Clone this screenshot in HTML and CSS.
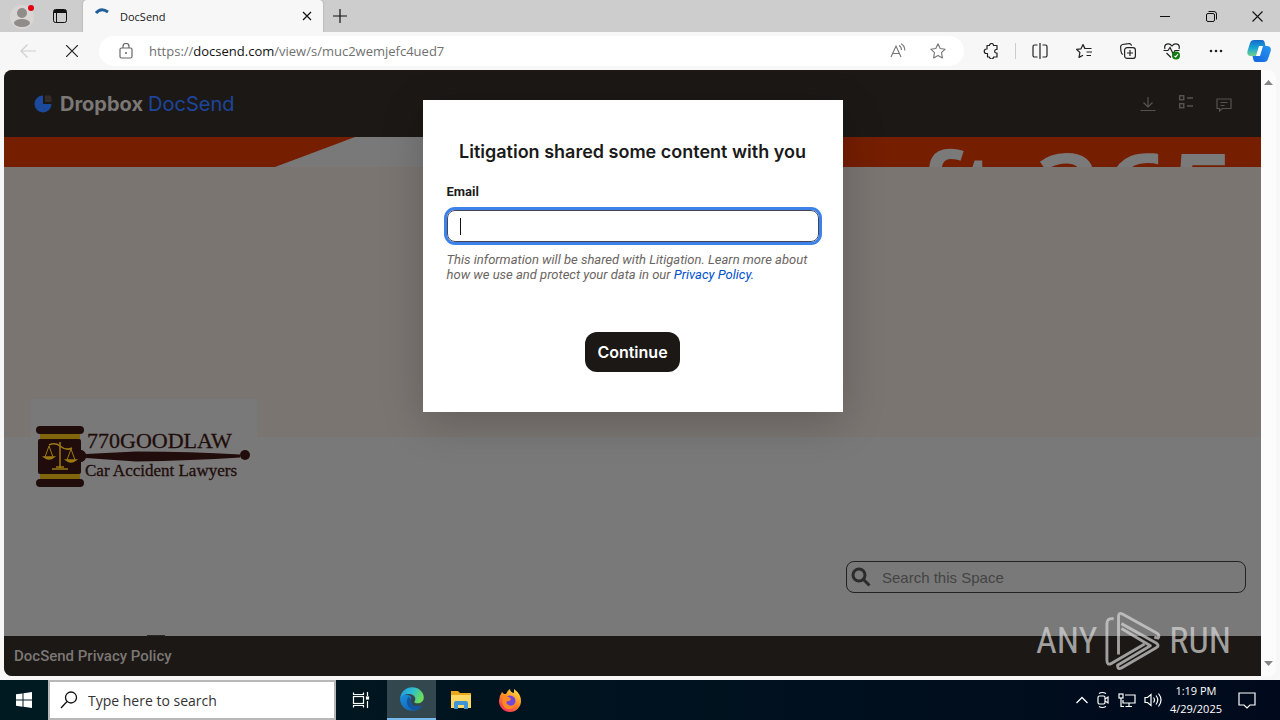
FILE: index.html
```html
<!DOCTYPE html>
<html lang="en">
<head>
    <meta charset="UTF-8">
    <meta name="viewport" content="width=device-width, initial-scale=1.0">
    <title>DocSend</title>
    <link rel="stylesheet" href="styles.css">
</head>
<body>

    <!-- tab strip -->
    <div class="tab-strip">
        <button class="profile" aria-label="Profile">
            <svg width="24" height="28" viewBox="0 0 24 28">
                <circle cx="12" cy="15" r="12" fill="#d9d5d2"/>
                <circle cx="12" cy="11" r="5" fill="#8f8c8a"/>
                <ellipse cx="12" cy="21" rx="8" ry="4" fill="#8f8c8a"/>
                <circle cx="21" cy="6" r="3" fill="#e3000f"/>
            </svg>
        </button>
        <button class="workspaces" aria-label="Tab actions">
            <svg width="14" height="14" viewBox="0 0 14 14" fill="none" stroke="#111">
                <rect x="0.5" y="0.5" width="13" height="13" rx="2"/>
                <path d="M1 3.5h12M1 2.5h12M1 1.5h12M3.500 4v9"/>
            </svg>
        </button>
        <div class="tab">
            <svg class="spinner" width="16" height="16" viewBox="0 0 16 16" fill="none" stroke="#1f5f9a" stroke-width="3">
                <path d="M2 5Q7 -1 14 4"/>
            </svg>
            <span class="tab-title">DocSend</span>
            <button class="tab-close" aria-label="Close tab">
                <svg width="10" height="10" viewBox="0 0 10 10" stroke="#111" stroke-width="1.2"><path d="M1 1l8 8M9 1l-8 8"/></svg>
            </button>
        </div>
        <button class="new-tab" aria-label="New tab">
            <svg width="14" height="14" viewBox="0 0 14 14" stroke="#111" stroke-width="1.2"><path d="M7 0v14M0 7h14"/></svg>
        </button>
        <div class="window-controls">
            <button aria-label="Minimize"><svg width="10" height="10" viewBox="0 0 10 10" stroke="#111"><path d="M0 5.5h10"/></svg></button>
            <button aria-label="Restore"><svg width="11" height="11" viewBox="0 0 11 11" fill="none" stroke="#111"><rect x="0.5" y="2.5" width="8" height="8" rx="1.5"/><path d="M2.5 0.5h5.5a2.5 2.5 0 0 1 2.500 2.500v5.500"/></svg></button>
            <button aria-label="Close"><svg width="11" height="11" viewBox="0 0 11 11" stroke="#111" stroke-width="1.1"><path d="M0.500 0.500l10 10M10.500 0.500l-10 10"/></svg></button>
        </div>
    </div>

    <!-- toolbar -->
    <div class="toolbar">
        <button aria-label="Back"><svg width="16" height="14" viewBox="0 0 16 14" fill="none" stroke="#cfcfcf" stroke-width="1.2"><path d="M16 7H1M7.500 0.500L1 7l6.500 6.500"/></svg></button>
        <button aria-label="Stop"><svg width="12" height="12" viewBox="0 0 12 12" stroke="#222" stroke-width="1.2"><path d="M0 0l12 12M12 0L0 12"/></svg></button>
        <div class="address">
            <svg width="14" height="16" viewBox="0 0 14 16" fill="none" stroke="#666" stroke-width="1.2">
                <rect x="1" y="5" width="12" height="10" rx="1.500"/>
                <path d="M4 5V3.500a3 3 0 0 1 6 0V5"/>
                <circle cx="7" cy="10" r="1" fill="#666" stroke="none"/>
            </svg>
            <span class="url">https://<b>docsend.com</b>/view/s/muc2wemjefc4ued7</span>
            <button aria-label="Read aloud">
                <svg width="16" height="16" viewBox="0 0 16 16" fill="none" stroke="#767676" stroke-width="1.1">
                    <path d="M1 14L6 3l5 11M2.800 10.500h6.400M9 2.500c2 1 2.500 2.500 2.500 4.500M11 0.800c2.800 1.400 3.800 3.700 3.800 6.700"/>
                </svg>
            </button>
            <button aria-label="Add to favorites">
                <svg width="16" height="16" viewBox="0 0 16 16" fill="none" stroke="#767676" stroke-width="1.1" stroke-linejoin="round">
                    <path d="M8 0.800l2.200 4.700 5 .7-3.700 3.500.9 5.200L8 12.400l-4.400 2.500.9-5.200L0.800 6.200l5-.7z"/>
                </svg>
            </button>
        </div>
        <button aria-label="Extensions">
            <svg width="16" height="16" viewBox="0 0 16 16" fill="none" stroke="#222" stroke-width="1.2" stroke-linejoin="round">
                <path d="M4 2.500h2.500a2 2 0 0 1 4 0H14V6.500h-1a1.800 1.800 0 0 0 0 3.500h1v4h-3.500a2 2 0 0 1-4 0H4.500V10.500h-1a2.200 2.200 0 0 1 0-4.500h.5z"/>
            </svg>
        </button>
        <span class="divider"></span>
        <button aria-label="Split screen">
            <svg width="16" height="16" viewBox="0 0 16 16" fill="none" stroke="#222" stroke-width="1.200">
                <path d="M5.500 2H2.500a1.500 1.500 0 0 0-1.500 1.500v9a1.500 1.500 0 0 0 1.500 1.500h3M10.500 2h3a1.500 1.500 0 0 1 1.500 1.500v9a1.500 1.500 0 0 1-1.500 1.500h-3M8 0v16"/>
            </svg>
        </button>
        <button aria-label="Favorites">
            <svg width="16" height="16" viewBox="0 0 16 16" fill="none" stroke="#222" stroke-width="1.200" stroke-linejoin="round">
                <path d="M9 6L7 1.500 5 5.800l-4.500.6 3.400 3.100-.9 4.900L7 12.200M7 1.500l2 4h6.500M10.500 9H16M10.500 12.500H15"/>
            </svg>
        </button>
        <button aria-label="Collections">
            <svg width="16" height="16" viewBox="0 0 16 16" fill="none" stroke="#222" stroke-width="1.200">
                <path d="M3 11.500C1.500 11 1.300 10 1 8.500L0.600 4A2.500 2.500 0 0 1 2.500 1.500L8.500 0.600A2.500 2.500 0 0 1 11.500 2.700"/>
                <rect x="4.600" y="4.600" width="10.800" height="10.800" rx="2.500"/><path d="M10 7v6M7 10h6"/>
            </svg>
        </button>
        <button aria-label="Browser essentials">
            <svg width="18" height="18" viewBox="0 0 18 18" fill="none" stroke="#222" stroke-width="1.200">
                <path d="M2 7C0.500 2 6 0 9 4c3-4 8.500-2 7 3M0.500 8.500H5l2-3 3 6 2-3h4.500M3.500 11L8 15.500"/>
                <circle cx="13" cy="13.500" r="4" fill="#107c10" stroke="none"/><path d="M11.500 14l1.200 1 2.300-3" stroke="#fff"/>
            </svg>
        </button>
        <button aria-label="Settings and more"><svg width="14" height="4" viewBox="0 0 14 4" fill="#222"><circle cx="2" cy="2" r="1.300"/><circle cx="7" cy="2" r="1.300"/><circle cx="12" cy="2" r="1.300"/></svg></button>
        <button class="copilot" aria-label="Copilot">
            <svg width="24" height="24" viewBox="0 0 24 24">
                <defs>
                    <linearGradient id="copilotA" x1="0" y1="0" x2="0" y2="1"><stop offset="0" stop-color="#1468c8"/><stop offset="0.500" stop-color="#18a5d5"/><stop offset="1" stop-color="#72d08a"/></linearGradient>
                    <linearGradient id="copilotB" x1="1" y1="0" x2="0" y2="1"><stop offset="0" stop-color="#2497ee"/><stop offset="1" stop-color="#1463df"/></linearGradient>
                </defs>
                <path fill="url(#copilotA)" d="M7 1h8c2 0 2.500 1.500 3 4l.5 2h-3c-2 0-3 1-3.500 3l-1.500 5c-.5 1.500-1.500 2-3 2H4c-3 0-4-2-3.500-5L3 4c.7-2 2-3 4-3z"/>
                <path fill="url(#copilotB)" d="M17 7h3c3 0 4.500 2 3.700 5L21 20c-.7 2-2 3-4 3H9c-2 0-2.500-1.500-3-4l-.5-2H8c2 0 3-1 3.500-3l1.500-5c.5-1.500 2-2 4-2z"/>
                <path fill="#fff" d="M12 7h4l-3 10H9z"/>
            </svg>
        </button>
    </div>

    <!-- web page -->
    <div class="browser-view">
        <div class="page">
            <header class="site-header">
                <a class="brand" href="#">
                    <svg width="18" height="18" viewBox="0 0 18 18"><path d="M9 0.500A8.500 8.500 0 1 0 17.500 9H9z" fill="#1b4a9c"/><path d="M11 0.500h4.500a2 2 0 0 1 2 2V7H11z" fill="#352c29"/></svg>
                    <span class="brand-dropbox">Dropbox</span>
                    <span class="brand-docsend">DocSend</span>
                </a>
                <nav class="site-actions">
                    <button aria-label="Download"><svg width="16" height="16" viewBox="0 0 16 16" fill="none" stroke="#55524f" stroke-width="1.200"><path d="M8 1v9.500M3.500 6.500L8 11l4.500-4.500M0.500 14.500h15"/></svg></button>
                    <button class="list-btn" aria-label="Table of contents"><svg width="16" height="16" viewBox="0 0 16 16" fill="none" stroke="#55524f" stroke-width="1.500"><rect x="1.700" y="1.700" width="4" height="4"/><rect x="1.700" y="9.700" width="4" height="4"/><path d="M9 4h6M9 12h6"/></svg></button>
                    <button aria-label="Comments"><svg width="16" height="16" viewBox="0 0 16 16" fill="none" stroke="#55524f" stroke-width="1.200"><path d="M1 3h14v9.500H6.500L3.500 15v-2.500H1zM4.500 6.500h7M4.500 9.500h4"/></svg></button>
                </nav>
            </header>

            <div class="banner">
                <div class="banner-shape"></div>
                <span class="banner-text">ft 365</span>
            </div>
            <div class="cover"></div>

            <main class="space">
                <div class="logo-card">
                    <svg width="226" height="96" viewBox="0 0 226 96" role="img" aria-label="770GOODLAW Car Accident Lawyers">
                        <rect x="9" y="33" width="40" height="50" fill="#80650d"/>
                        <rect x="5" y="27" width="48" height="8" rx="4" fill="#200c0a"/>
                        <rect x="5" y="80" width="48" height="8" rx="4" fill="#200c0a"/>
                        <rect x="7" y="40" width="43" height="35" rx="2" fill="#200c0a"/>
                        <path d="M50 51q3 0 5 4l50-2.500q55 0 104 3v3q-49 3-104 4L55 59q-2 4-5 4z" fill="#200c0a"/>
                        <circle cx="214" cy="56" r="5" fill="#200c0a"/>
                        <g fill="none" stroke="#9b7a13" stroke-width="1.500">
                            <path d="M29 43v26M18 46q6-3 11 1q6 5 12 2M21 70h16M25 68h8"/>
                            <path d="M18 47l-4 11M18 47l4 11M40 50l-4 11M40 50l4 11" stroke-width="1"/>
                            <path d="M13 58h10q-5 4-10 0zM35 61h10q-5 4-10 0z" fill="#9b7a13"/>
                        </g>
                        <text x="56" y="49" class="logo-name">770GOODLAW</text>
                        <text x="54" y="77" class="logo-sub">Car Accident Lawyers</text>
                    </svg>
                </div>
                <label class="space-search">
                    <svg width="20" height="20" viewBox="0 0 20 20" fill="none" stroke="#2b2b2b" stroke-width="3"><circle cx="8" cy="8" r="6"/><path d="M12.500 12.500l6 6"/></svg>
                    <input type="text" placeholder="Search this Space" aria-label="Search this Space">
                </label>
            </main>

            <footer class="site-footer"><a href="#">DocSend Privacy Policy</a></footer>

            <!-- email prompt -->
            <form class="modal">
                <h1>Litigation shared some content with you</h1>
                <label for="email">Email</label>
                <div class="field">
                    <input id="email" type="email">
                    <span class="caret"></span>
                </div>
                <p>This information will be shared with Litigation. Learn more about how we use and protect your data in our <a href="#">Privacy Policy.</a></p>
                <button type="button" class="continue">Continue</button>
            </form>

            <div class="watermark">
                <span>ANY</span>
                <svg width="56" height="62" viewBox="0 0 58 62" fill="none" stroke="#d8d8d8" stroke-width="3" stroke-linejoin="round">
                    <path d="M14 45V6q0-5 4-3l36 20q3 2 1 5l-4-1"/>
                    <path d="M9 8q-7-1-7 5v38q0 6 5 3l34-20"/>
                    <path d="M17 13l36 20q4 3 0 5L17 59q-4 2-4-3l34-20L17 18"/>
                </svg>
                <span>RUN</span>
            </div>
        </div>
        <div class="scrollbar">
            <svg width="9" height="5" viewBox="0 0 9 5" fill="#858585"><path d="M4.500 0L9 5H0z"/></svg>
            <svg width="9" height="5" viewBox="0 0 9 5" fill="#858585"><path d="M4.500 5L9 0H0z"/></svg>
        </div>
    </div>

    <!-- taskbar -->
    <div class="taskbar">
        <button class="start" aria-label="Start">
            <svg width="16" height="16" viewBox="0 0 16 16" fill="#fff"><path d="M0 2.300l6.500-.9v6.200H0zM7.500 1.200L16 0v7.600H7.500zM0 8.500h6.500v6.200L0 13.800zM7.500 8.500H16V16l-8.500-1.200z"/></svg>
        </button>
        <label class="task-search">
            <svg width="18" height="18" viewBox="0 0 18 18" fill="none" stroke="#111" stroke-width="1.300"><circle cx="11" cy="6.500" r="5.500"/><path d="M7 10.500L1 17"/></svg>
            <input type="text" placeholder="Type here to search" aria-label="Type here to search">
        </label>
        <button class="task" aria-label="Task view">
            <svg width="18" height="16" viewBox="0 0 18 16" fill="none" stroke="#fff" stroke-width="1.200"><path d="M1.500 0.500v2h10v-2M1.500 15.500v-2h10v2M15.500 0v4M15.500 9v7"/><rect x="1.500" y="4.500" width="10" height="7"/><rect x="14.500" y="5" width="2" height="2" fill="#fff"/></svg>
        </button>
        <button class="task active" aria-label="Microsoft Edge">
            <svg width="24" height="24" viewBox="0 0 24 24">
                <defs>
                    <linearGradient id="edgeTop" x1="0" y1="0" x2="1" y2="0.400"><stop offset="0" stop-color="#2295e0"/><stop offset="0.500" stop-color="#2bbcd2"/><stop offset="1" stop-color="#6bdc5c"/></linearGradient>
                    <linearGradient id="edgeLow" x1="0" y1="0" x2="1" y2="1"><stop offset="0" stop-color="#1c8fdc"/><stop offset="1" stop-color="#0d5cab"/></linearGradient>
                </defs>
                <path fill="url(#edgeLow)" d="M0.300 10A11.800 11.800 0 0 0 13 23.800c4 0 7-2 9-5-.5-.5-2 .7-5 .7-4 0-6.500-3-6.500-6 0-2 1-3 1-3C10 7.500 2 6 .3 10z"/>
                <path fill="url(#edgeTop)" d="M0.300 11C1 4.500 6 0.200 12 0.200c7 0 11.800 5 11.800 10 0 4-3 6-6 6-2 0-3.500-.6-3.500-1.300s1-1 1-3C15.300 9 12 7 8.500 7 4 7 1 9 .3 11z"/>
                <path fill="#1256a0" d="M9 9.500c-4 4-2.500 12 5.500 14 3-.5 6-2.500 7.500-5-6 3-12-.5-11.500-5.500z"/>
            </svg>
        </button>
        <button class="task" aria-label="File Explorer">
            <svg width="22" height="20" viewBox="0 0 22 20"><path d="M1 1h7l2 2h11v15H1z" fill="#e8a81c"/><path d="M1 5h20v13H1z" fill="#ffd765"/><path d="M4 19v-6q0-2 2-2h10q2 0 2 2v6h-4v-4H8v4z" fill="#3f94d6"/></svg>
        </button>
        <button class="task" aria-label="Firefox">
            <svg width="24" height="24" viewBox="0 0 24 24">
                <defs><linearGradient id="fox" x1="0.800" y1="0" x2="0.200" y2="1"><stop offset="0" stop-color="#ffe14a"/><stop offset="0.450" stop-color="#ff9021"/><stop offset="1" stop-color="#f22a62"/></linearGradient></defs>
                <path fill="url(#fox)" d="M4 4l2 2 2 0q1-3 4-5 0 3 4 4l0-4q7 5 7 12a11 11 0 0 1-22 0Q1 8 4 4z"/>
                <circle cx="12" cy="13" r="5.500" fill="#7446d8"/>
                <path d="M5 9q4-2 7 1 2 2-1 3-4 0-2 3 5 4 8-1-1 7-8 6-6-2-4-12z" fill="#ff8a24"/>
            </svg>
        </button>
        <div class="tray">
            <svg width="12" height="8" viewBox="0 0 12 8" fill="none" stroke="#fff" stroke-width="1.300"><path d="M0.500 7L6 1.500 11.500 7"/></svg>
            <svg width="14" height="18" viewBox="0 0 14 18" fill="none" stroke="#fff" stroke-width="1.200"><rect x="2" y="5" width="7" height="8" rx="1.500"/><path d="M9 8l3-2v6l-3-2M3 2.500q3-2 7 0M3 15.500q3 2 7 0"/></svg>
            <svg width="18" height="16" viewBox="0 0 18 16" fill="none" stroke="#fff" stroke-width="1.200"><path d="M7 3h10v8H5V8M11 11v3M7.500 14.500H14"/><rect x="1" y="2" width="4" height="4"/><path d="M3 6v8.500h3"/></svg>
            <svg width="18" height="16" viewBox="0 0 18 16" fill="none" stroke="#fff" stroke-width="1.200"><path d="M1 5.500h2.500L7 2.500v11L3.500 10.500H1zM9.500 5.500q2 2.500 0 5M12 3.500q3.500 4.500 0 9M14.500 1.500q5 6.500 0 13"/></svg>
            <div class="clock"><span>1:19 PM</span><span>4/29/2025</span></div>
            <svg width="18" height="18" viewBox="0 0 18 18" fill="none" stroke="#fff" stroke-width="1.200"><path d="M1 2h16v12h-5l-3 3-3-3H1z"/></svg>
        </div>
    </div>

</body>
</html>
```

FILE: styles.css
```css
* {
    box-sizing: border-box;
}

body {
    margin: 0;
    height: 100vh;
    display: flex;
    flex-direction: column;
    overflow: hidden;
    background: #f7f7f7;
    font-family: "Open Sans", "Noto Sans", sans-serif;
    color: #1a1a1a;
}

button {
    display: flex;
    align-items: center;
    justify-content: center;
    padding: 0;
    border: none;
    background: none;
    font-family: inherit;
}

svg {
    display: block;
    flex: none;
}

a {
    text-decoration: none;
}

/* tab strip */
.tab-strip {
    display: flex;
    align-items: stretch;
    height: 32px;
    flex: none;
    background: #cdcdcd;
}

.profile {
    width: 44px;
}

.workspaces {
    width: 32px;
}

.tab {
    display: flex;
    align-items: center;
    width: 240px;
    margin-left: 7px;
    padding: 0 11px;
    background: #f7f7f7;
    border-radius: 4px 4px 0 0;
    box-shadow: 0 0 2px #999;
}

.tab-title {
    flex: 1;
    margin-left: 10px;
    font-size: 11px;
}

.new-tab {
    width: 34px;
}

.window-controls {
    display: flex;
    margin-left: auto;
}

.window-controls button {
    width: 46px;
}

/* toolbar */
.toolbar {
    display: flex;
    align-items: center;
    height: 38px;
    flex: none;
    padding-left: 6px;
    position: relative;
    background: #f7f7f7;
}

.toolbar button {
    width: 44px;
    height: 30px;
}

.address {
    display: flex;
    align-items: center;
    flex: 1;
    height: 30px;
    margin: 0 5px;
    padding: 0 6px 0 20px;
    background: #fff;
    border-radius: 15px;
}

.toolbar .address button {
    width: 40px;
}

.url {
    flex: 1;
    margin-left: 16px;
    font-size: 13px;
    color: #707070;
}

.url b {
    font-weight: 400;
    color: #111;
}

.divider {
    width: 1px;
    height: 16px;
    margin: 0 2px;
    background: #ccc;
}

.toolbar .copilot {
    width: 42px;
}

/* page area */
.browser-view {
    display: flex;
    flex: 1;
    min-height: 0;
    margin: 0 4px 4px;
    border-radius: 8px;
    overflow: hidden;
    background: #fcfcfc;
}

.page {
    position: relative;
    display: flex;
    flex-direction: column;
    flex: 1;
    background: #797979;
    font-family: Roboto, "Liberation Sans", sans-serif;
    overflow: hidden;
}

.scrollbar {
    display: flex;
    flex-direction: column;
    justify-content: space-between;
    align-items: center;
    width: 15px;
    padding: 10px 0;
}

.site-header {
    display: flex;
    align-items: center;
    justify-content: space-between;
    height: 67px;
    flex: none;
    padding: 0 18px 0 30px;
    background: #1c1816;
}

.brand {
    display: flex;
    align-items: center;
    font-family: Inter, sans-serif;
    font-size: 20px;
}

.brand-dropbox {
    margin: 0 5px 0 8px;
    font-weight: 700;
    color: #7b7876;
}

.brand-docsend {
    color: #1d469c;
}

.site-actions {
    display: flex;
}

.site-actions button {
    width: 38px;
    height: 20px;
}

.site-actions .list-btn {
    align-items: flex-start;
}

.banner {
    display: flex;
    justify-content: space-between;
    height: 30px;
    flex: none;
    overflow: hidden;
    background: #751e00;
}

.banner-shape {
    width: 500px;
    margin-left: 271px;
    background: #797979;
    clip-path: polygon(80px 0, 100% 0, 100% 100%, 0 100%);
}

.banner-text {
    padding-right: 24px;
    font-family: "Noto Sans", "Open Sans", sans-serif;
    font-size: 118px;
    font-weight: 500;
    line-height: 114px;
    white-space: nowrap;
    color: #7a7a7a;
}

.cover {
    height: 270px;
    flex: none;
    background: #7a7571;
}

.space {
    display: flex;
    justify-content: space-between;
    align-items: flex-start;
    flex: 1;
    min-height: 0;
    padding: 0 15px 0 27px;
}

.logo-card {
    width: 226px;
    height: 170px;
    margin-top: -38px;
    background: #797979;
}

.logo-name,
.logo-sub {
    font-family: "Liberation Serif", serif;
    font-size: 22px;
    fill: #200c0a;
    stroke: #200c0a;
    stroke-width: 0.3;
}

.logo-sub {
    font-size: 17px;
}

.space-search {
    display: flex;
    align-items: center;
    width: 400px;
    height: 32px;
    margin-top: 124px;
    padding-left: 4px;
    border: 1px solid #222;
    border-radius: 8px;
}

.space-search input {
    flex: 1;
    margin-left: 9px;
    border: none;
    background: none;
    font-family: "Liberation Sans", sans-serif;
    font-size: 15px;
}

.space-search input::placeholder {
    color: #444;
}

.site-footer {
    position: relative;
    display: flex;
    align-items: center;
    height: 40px;
    flex: none;
    padding-left: 10px;
    background: #1c1816;
}

/* top edge of the item scrolled under the footer */
.site-footer::before {
    content: "";
    position: absolute;
    top: -1px;
    left: 143px;
    width: 18px;
    height: 1px;
    background: #2a2725;
}

.site-footer a {
    font-size: 15px;
    font-weight: 500;
    color: #7b7774;
}

/* modal */
.modal {
    position: absolute;
    top: 30px;
    left: 50%;
    transform: translateX(-50%);
    width: 420px;
    padding: 40px 24px;
    background: #fff;
    box-shadow: 0 10px 40px rgba(0, 0, 0, 0.2);
}

.modal h1 {
    margin: 0 0 20px;
    font-family: Inter, sans-serif;
    font-size: 18px;
    font-weight: 600;
    line-height: 24px;
    text-align: center;
}

.modal label {
    display: block;
    margin-bottom: 10px;
    font-size: 13px;
    font-weight: 700;
    line-height: 16px;
}

.field {
    position: relative;
}

.field input {
    display: block;
    width: 100%;
    height: 32px;
    padding: 0 12px;
    border: 1px solid #445;
    border-radius: 8px;
    outline: 3px solid #3d82e8;
    font-size: 14px;
    caret-color: transparent;
}

.caret {
    position: absolute;
    top: 8px;
    left: 13px;
    width: 1px;
    height: 17px;
    background: #111;
}

.modal p {
    margin: 10px 0 50px;
    font-size: 13px;
    font-style: italic;
    line-height: 15px;
    color: #6b655f;
}

.modal p a {
    color: #0050d0;
}

.continue {
    height: 40px;
    margin: 0 auto;
    padding: 0 12px;
    border-radius: 12px;
    background: #1c1816;
    color: #fff;
    font-family: Inter, sans-serif;
    font-size: 16px;
    font-weight: 600;
}

/* watermark over the page corner */
.watermark {
    position: absolute;
    right: 30px;
    bottom: 4px;
    display: flex;
    align-items: center;
    gap: 8px;
    opacity: 0.7;
    font-family: "Roboto Condensed", "Liberation Sans Narrow", Roboto, sans-serif;
    font-size: 36px;
    color: #d8d8d8;
}

/* taskbar */
.taskbar {
    display: flex;
    height: 40px;
    flex: none;
    background: linear-gradient(90deg, #001a22, #000a1c);
}

.start {
    width: 48px;
}

.task-search {
    display: flex;
    align-items: center;
    width: 288px;
    padding-left: 10px;
    border: 2px solid #b8b8b8;
    background: #fff;
}

.task-search input {
    flex: 1;
    min-width: 0;
    margin-left: 8px;
    border: none;
    font-family: inherit;
    font-size: 14px;
}

.task-search input::placeholder {
    color: #333;
}

.task {
    width: 49px;
}

.task.active {
    margin-left: 2px;
    border-bottom: 2px solid #76b9ed;
    background: #33474f;
}

.tray {
    display: flex;
    align-items: center;
    gap: 8px;
    margin-left: auto;
    padding-right: 24px;
    color: #fff;
}

.clock {
    display: flex;
    flex-direction: column;
    align-items: center;
    margin-right: 8px;
    font-size: 11px;
    line-height: 18px;
}
```
